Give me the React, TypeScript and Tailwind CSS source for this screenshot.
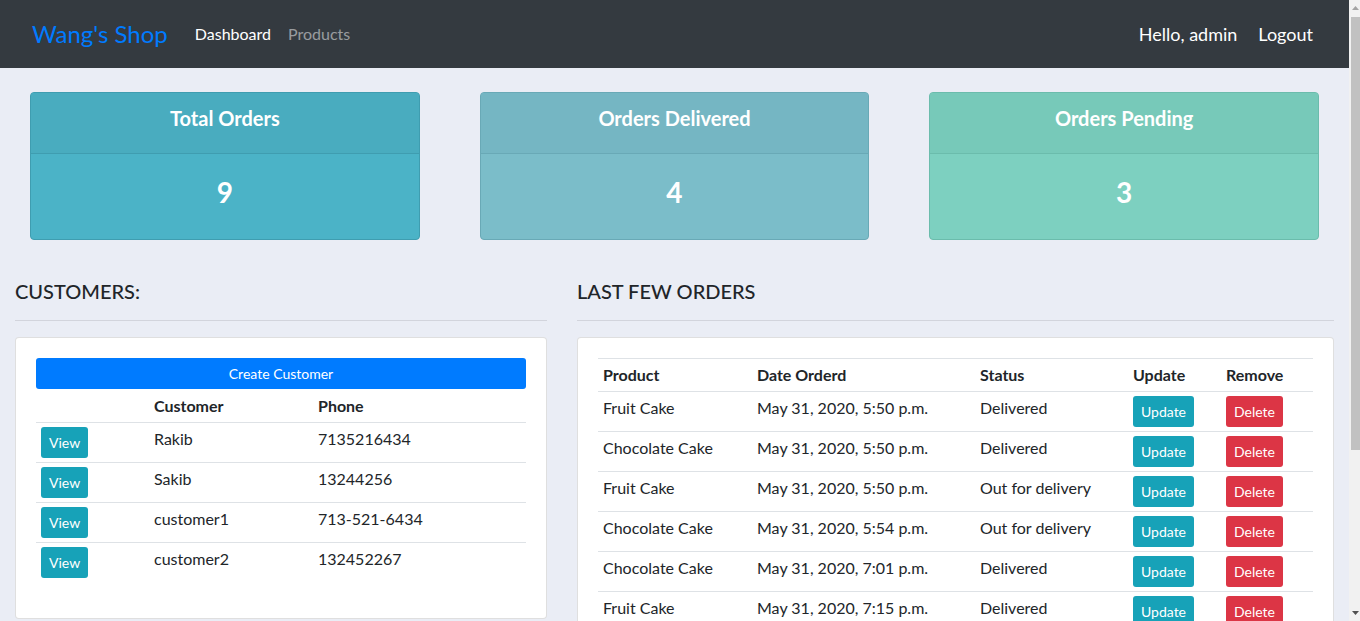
import React from 'react';

const stats = [
  { title: 'Total Orders', value: 9, head: 'bg-[#49acbf]', body: 'bg-[#4bb3c7]', border: 'border-[#3f9db0]', line: 'border-[#3f9db0]' },
  { title: 'Orders Delivered', value: 4, head: 'bg-[#75b6c3]', body: 'bg-[#7bbdc9]', border: 'border-[#69a9b6]', line: 'border-[#69a9b6]' },
  { title: 'Orders Pending', value: 3, head: 'bg-[#77c9b9]', body: 'bg-[#7dd0c0]', border: 'border-[#6bbcac]', line: 'border-[#6bbcac]' },
];

const customers = [
  { name: 'Rakib', phone: '7135216434' },
  { name: 'Sakib', phone: '13244256' },
  { name: 'customer1', phone: '713-521-6434' },
  { name: 'customer2', phone: '132452267' },
];

const orders = [
  { product: 'Fruit Cake', date: 'May 31, 2020, 5:50 p.m.', status: 'Delivered' },
  { product: 'Chocolate Cake', date: 'May 31, 2020, 5:50 p.m.', status: 'Delivered' },
  { product: 'Fruit Cake', date: 'May 31, 2020, 5:50 p.m.', status: 'Out for delivery' },
  { product: 'Chocolate Cake', date: 'May 31, 2020, 5:54 p.m.', status: 'Out for delivery' },
  { product: 'Chocolate Cake', date: 'May 31, 2020, 7:01 p.m.', status: 'Delivered' },
  { product: 'Fruit Cake', date: 'May 31, 2020, 7:15 p.m.', status: 'Delivered' },
];

const Btn: React.FC<{ color: string; children: React.ReactNode }> = ({ color, children }) => (
  <span className={`inline-flex h-[31px] items-center rounded-[3px] px-2 text-[14px] text-white ${color}`}>{children}</span>
);

export default function App() {
  return (
    <div className="flex h-[621px] w-[1360px] overflow-hidden bg-[#eaedf5] font-['Lato','Liberation_Sans',sans-serif] text-[16px] text-[#212529]">
      <div className="w-[1349px] shrink-0">
        {/* navbar */}
        <nav className="flex h-[68px] items-center bg-[#343a40] pl-8 pr-[36px]">
          <span className="text-[24px] text-[#007bff]">Wang's Shop</span>
          <span className="ml-[27px] text-white">Dashboard</span>
          <span className="ml-[17px] text-white/50">Products</span>
          <div className="ml-auto flex items-center gap-[21px] text-[18px] text-white">
            <span>Hello, admin</span>
            <span>Logout</span>
          </div>
        </nav>

        {/* stat cards */}
        <div className="mt-6 grid grid-cols-3 gap-x-[60px] px-[30px]">
          {stats.map((s) => (
            <div key={s.title} className={`overflow-hidden rounded-[4px] border text-center text-white ${s.border} ${s.body}`}>
              <div className={`border-b pt-[13px] pb-[23px] text-[20px] leading-[24px] font-bold ${s.head} ${s.line}`}>{s.title}</div>
              <div className="pt-[21px] pb-[30px] text-[28px] leading-[34px] font-bold">{s.value}</div>
            </div>
          ))}
        </div>

        {/* lower area */}
        <div className="mt-[39px] flex gap-[30px] px-[15px]">
          <div className="w-[532px] shrink-0">
            <h5 className="text-[20px] leading-[24px] font-medium">CUSTOMERS:</h5>
            <hr className="mt-[17px] mb-4 border-t border-black/10" />
            <div className="rounded-[4px] border border-black/[0.125] bg-white p-5">
              <div className="flex h-[31px] items-center justify-center rounded-[3px] bg-[#007bff] text-[14px] text-white">Create Customer</div>
              <table className="mb-[15px] w-full border-collapse text-left">
                <thead>
                  <tr>
                    <th className="w-[113px] px-[5px] pt-[5px] pb-[4px] leading-[24px]"></th>
                    <th className="w-[164px] px-[5px] pt-[5px] pb-[4px] leading-[24px] font-bold">Customer</th>
                    <th className="px-[5px] pt-[5px] pb-[4px] leading-[24px] font-bold">Phone</th>
                  </tr>
                </thead>
                <tbody>
                  {customers.map((c) => (
                    <tr key={c.name} className="border-t border-[#dee2e6] align-top">
                      <td className="h-[40px] px-[5px] pt-[4px]"><Btn color="bg-[#17a2b8]">View</Btn></td>
                      <td className="px-[5px] pt-[4px] leading-[24px]">{c.name}</td>
                      <td className="px-[5px] pt-[4px] leading-[24px]">{c.phone}</td>
                    </tr>
                  ))}
                </tbody>
              </table>
            </div>
          </div>

          <div className="w-[757px] shrink-0">
            <h5 className="text-[20px] leading-[24px] font-medium">LAST FEW ORDERS</h5>
            <hr className="mt-[17px] mb-4 border-t border-black/10" />
            <div className="rounded-[4px] border border-black/[0.125] bg-white p-5">
              <table className="w-full border-collapse text-left">
                <thead>
                  <tr className="border-t border-[#dee2e6]">
                    <th className="w-[154px] px-[5px] py-[4px] leading-[24px] font-bold">Product</th>
                    <th className="w-[223px] px-[5px] py-[4px] leading-[24px] font-bold">Date Orderd</th>
                    <th className="w-[153px] px-[5px] py-[4px] leading-[24px] font-bold">Status</th>
                    <th className="w-[94px] px-[5px] py-[4px] leading-[24px] font-bold">Update</th>
                    <th className="px-[4px] py-[4px] leading-[24px] font-bold">Remove</th>
                  </tr>
                </thead>
                <tbody>
                  {orders.map((o, i) => (
                    <tr key={i} className="border-t border-[#dee2e6] align-top">
                      <td className="h-[40px] px-[5px] pt-[4px] leading-[24px]">{o.product}</td>
                      <td className="px-[5px] pt-[4px] leading-[24px]">{o.date}</td>
                      <td className="px-[5px] pt-[4px] leading-[24px]">{o.status}</td>
                      <td className="px-[5px] pt-[4px]"><Btn color="bg-[#17a2b8]">Update</Btn></td>
                      <td className="px-[4px] pt-[4px]"><Btn color="bg-[#dc3545]">Delete</Btn></td>
                    </tr>
                  ))}
                </tbody>
              </table>
            </div>
          </div>
        </div>
      </div>

      {/* browser scrollbar */}
      <div className="flex w-[11px] shrink-0 flex-col bg-[#f1f1f1] pl-[2px]">
        <svg width="9" height="17" viewBox="0 0 9 17"><path d="M1 10 L4.5 6 L8 10 Z" fill="#a3a3a3" /></svg>
        <div className="h-[433px] bg-[#c1c1c1]"></div>
        <div className="flex-1"></div>
        <svg width="9" height="17" viewBox="0 0 9 17"><path d="M1 7 L4.5 11 L8 7 Z" fill="#505050" /></svg>
      </div>
    </div>
  );
}
